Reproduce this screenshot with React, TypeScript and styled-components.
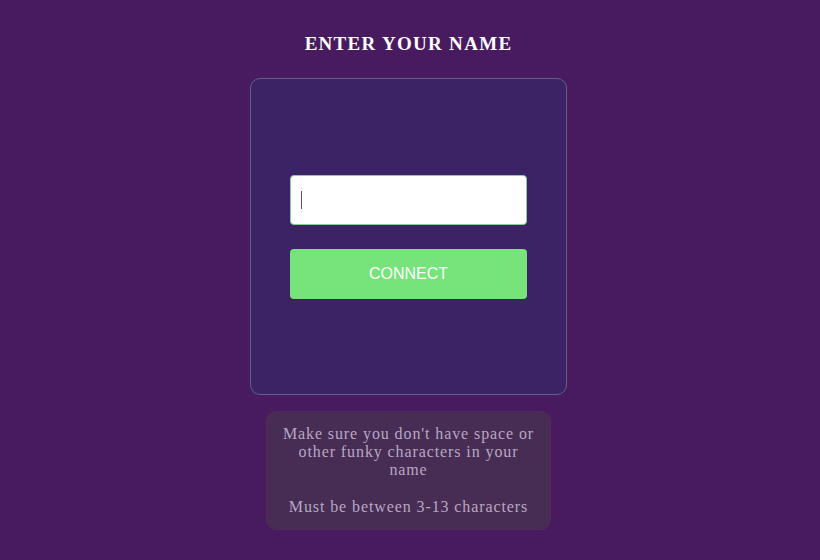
import React from 'react'
import styled, { createGlobalStyle } from 'styled-components'

const GlobalStyle = createGlobalStyle`
    html, body {
        margin: 0;
        padding: 0;
        background: #481a5f;
    }
    body {
        font-family: "Liberation Serif", "Times New Roman", serif;
    }
`

const App = () => {
    return (
        <>
            <GlobalStyle />
            <Page>
                <Title>ENTER YOUR NAME</Title>
                <Card>
                    <Field>
                        <NameInput defaultValue="" />
                        <Caret />
                    </Field>
                    <ConnectButton>CONNECT</ConnectButton>
                </Card>
                <InfoBox>
                    <InfoText>Make sure you don't have space or other funky characters in your name</InfoText>
                    <InfoText>Must be between 3-13 characters</InfoText>
                </InfoBox>
            </Page>
        </>
    )
}

export default App

const Page = styled.div`
    width: 820px;
    height: 560px;
    display: flex;
    flex-direction: column;
    align-items: center;
    padding: 33px 3px 0 0;
    box-sizing: border-box;
`

const Title = styled.h1`
    margin: 0 0 23px;
    font-size: 19px;
    font-weight: bold;
    letter-spacing: 1.3px;
    color: #ffffff;
    line-height: 22px;
`

const Card = styled.div`
    width: 317px;
    height: 317px;
    box-sizing: border-box;
    background: #3c2366;
    border: 1px solid #5d6283;
    border-radius: 10px;
    display: flex;
    flex-direction: column;
    align-items: center;
    justify-content: center;
    gap: 24px;
`

const Field = styled.div`
    position: relative;
    width: 237px;
    height: 50px;
`

const NameInput = styled.input`
    width: 100%;
    height: 100%;
    box-sizing: border-box;
    border: 1px solid #86cf98;
    border-radius: 4px;
    background: #ffffff;
    outline: none;
    padding: 0 10px;
    font-size: 20px;
    font-family: "Liberation Sans", Arial, sans-serif;
`

const Caret = styled.span`
    position: absolute;
    left: 11px;
    top: 16px;
    width: 1px;
    height: 18px;
    background: #555555;
`

const ConnectButton = styled.button`
    all: unset;
    width: 237px;
    height: 50px;
    box-sizing: border-box;
    border-radius: 4px;
    background: #77e37b;
    color: #ffffff;
    font-family: "Liberation Sans", Arial, sans-serif;
    font-size: 16px;
    text-align: center;
    cursor: pointer;
`

const InfoBox = styled.div`
    margin-top: 16px;
    width: 285px;
    box-sizing: border-box;
    padding: 13px 15px;
    background: #472c53;
    border: 1px solid #552a5a;
    border-radius: 10px;
    display: flex;
    flex-direction: column;
    gap: 19px;
`

const InfoText = styled.p`
    margin: 0;
    text-align: center;
    color: #b8a8c4;
    font-size: 16px;
    line-height: 18px;
    letter-spacing: 0.9px;
`
